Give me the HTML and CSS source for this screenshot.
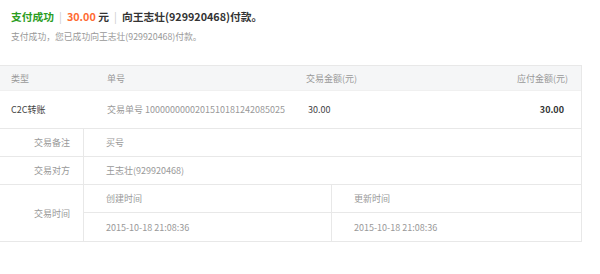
FILE: index.html
```html
<!DOCTYPE html>
<html lang="zh-CN">
<head>
    <meta charset="UTF-8">
    <title>支付成功</title>
    <link rel="stylesheet" href="styles.css">
</head>
<body>
<div class="result">
    <h1><span class="ok">支付成功</span><i>|</i><span class="money">30.00</span> 元<i>|</i>向王志壮(929920468)付款。</h1>
    <p>支付成功，您已成功向王志壮(929920468)付款。</p>
</div>
<div class="bill">
    <div class="head">
        <span>类型</span>
        <span>单号</span>
        <span>交易金额(元)</span>
        <span class="r">应付金额(元)</span>
    </div>
    <div class="row">
        <span class="dark">C2C转账</span>
        <span>交易单号 1000000000201510181242085025</span>
        <span class="dark">30.00</span>
        <span class="r sum">30.00</span>
    </div>
    <div class="detail">
        <div class="lbl">交易备注</div>
        <div class="val wide">买号</div>
        <div class="lbl">交易对方</div>
        <div class="val wide">王志壮(929920468)</div>
        <div class="lbl tall">交易时间</div>
        <div class="val">创建时间</div>
        <div class="val">更新时间</div>
        <div class="val">2015-10-18 21:08:36</div>
        <div class="val">2015-10-18 21:08:36</div>
    </div>
</div>
</body>
</html>
```
FILE: styles.css
```css
* {margin:0; padding:0; box-sizing:border-box;}
body {font-family:"Noto Sans CJK SC", "Noto Sans", sans-serif; color:#333; background:#fff; width:600px;}
.result {padding:9px 11px 0;}
.result h1 {font-size:10.75px; font-weight:bold; line-height:15px; color:#333;}
.result h1 i {font-style:normal; font-weight:normal; color:#ccc; margin:0 5px;}
.result .ok {color:#2c9d1f;}
.result .money {color:#ff6a33;}
.result p {font-size:8.8px; color:#999; margin-top:7px; line-height:12px;}
.bill {width:582px; margin-top:22px; border:1px solid #e8e8e8; border-left:none; font-size:9px; color:#999;}
.head, .row {display:grid; grid-template-columns:96px 199px 1fr auto; align-items:center;}
.head {height:24px; background:#f5f6f7;}
.row {height:39px; border-top:1px solid #f0f0f0; border-bottom:1px solid #e8e8e8;}
.head span, .row span {padding-left:11px;}
.head .r {padding-right:13px;}
.row .r {padding-right:17px;}
.row .dark {color:#444;}
.row span:nth-child(3) {padding-left:13px;}
.row .sum {color:#333; font-weight:bold;}
.detail {display:grid; grid-template-columns:84px 248px 1fr; grid-auto-rows:28px;}
.detail > div {display:flex; align-items:center; border-bottom:1px solid #e8e8e8;}
.detail > div:nth-last-child(-n+2) {border-bottom:none;}
.lbl {justify-content:flex-end; padding-right:13px; border-right:1px solid #e8e8e8;}
.lbl.tall {grid-row:span 2; border-bottom:none !important;}
.val {padding-left:22px;}
.val.wide {grid-column:span 2;}
.detail > div:nth-child(6) {border-right:1px solid #e8e8e8;}
.detail > div:nth-child(8) {border-right:1px solid #e8e8e8;}
```
